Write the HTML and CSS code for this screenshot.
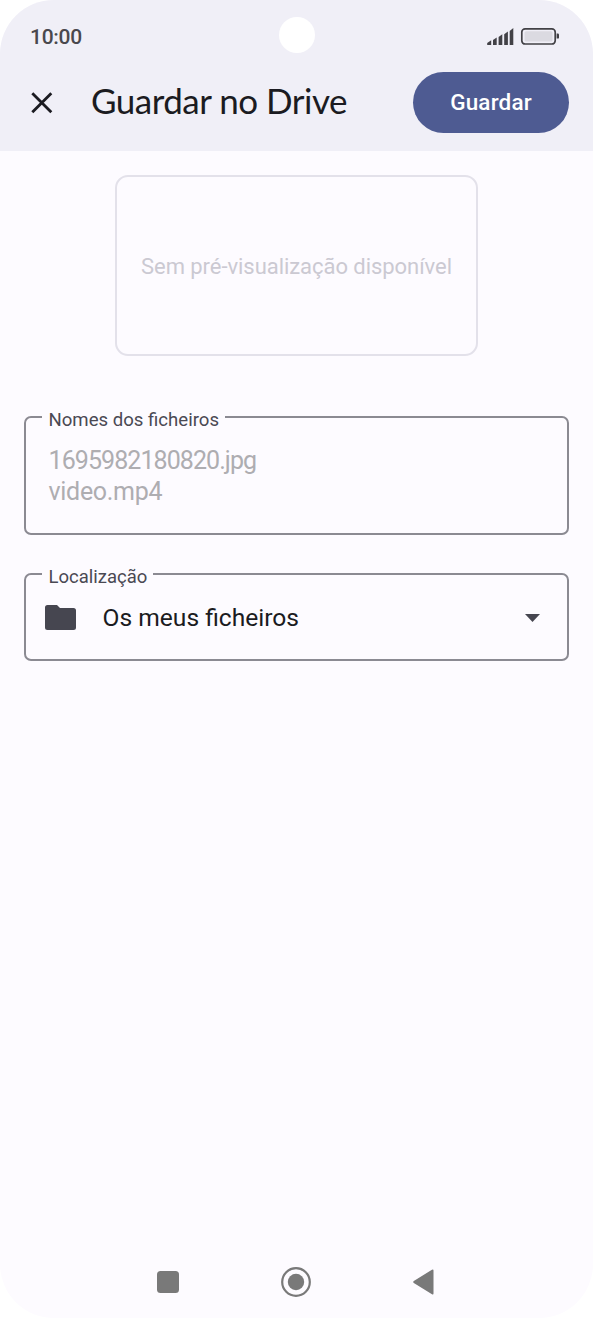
FILE: index.html
```html
<!DOCTYPE html>
<html lang="pt">
<head>
<meta charset="utf-8">
<title>Guardar no Drive</title>
<link rel="stylesheet" href="styles.css">
</head>
<body>
<div class="phone">
  <header class="top">
    <div class="status">
      <span class="clock">10:00</span>
      <span class="camera"></span>
      <svg class="indicators" viewBox="486 26 74 20" width="74" height="20">
        <path class="signal" d="M487.2 45v-2l4-2.8V45zM493 45v-5l3.7-2.6V45zM498.6 45v-8l3.7-2.8V45zM504.2 45V34.200l3.700-2.800V45zM509.700 45V31l3.600-3V45z"/>
        <rect class="battery" x="521.800" y="28.800" width="33.400" height="15.200" rx="3.300"/>
        <rect class="charge" x="524.500" y="31.300" width="28" height="10.200" rx="1.500"/>
        <path class="signal" d="M556.600 33.600h1.200q1.200 0 1.200 1.200v2.600q0 1.200-1.200 1.200h-1.200z"/>
      </svg>
    </div>
    <div class="appbar">
      <svg class="close" viewBox="0 0 22 22" width="22" height="22"><path d="M1.300 1.300l19 19M20.300 1.300l-19 19"/></svg>
      <h1 class="title">Guardar no Drive</h1>
      <button class="save"><span class="save-text">Guardar</span></button>
    </div>
  </header>
  <main class="content">
    <div class="preview"><span class="preview-text">Sem pré-visualização disponível</span></div>
    <fieldset class="field names">
      <legend class="legend"><span class="names-label">Nomes dos ficheiros</span></legend>
      <div class="files"><div><span class="file-one">1695982180820.jpg</span></div><div><span class="file-two">video.mp4</span></div></div>
    </fieldset>
    <fieldset class="field location">
      <legend class="legend"><span class="location-label">Localização</span></legend>
      <div class="picker">
        <svg class="folder" viewBox="0 0 31 25" width="31" height="25"><path d="M2.500 0H12l3 3h13.500Q31 3 31 5.500v17Q31 25 28.500 25h-26Q0 25 0 22.500v-20Q0 0 2.500 0z"/></svg>
        <span class="place">Os meus ficheiros</span>
        <svg class="arrow" viewBox="0 0 15 8" width="15" height="8"><path d="M0 0h15L7.500 8z"/></svg>
      </div>
    </fieldset>
  </main>
  <nav class="nav">
    <svg viewBox="0 0 22 22" width="22" height="22"><rect width="22" height="22" rx="3.500"/></svg>
    <svg viewBox="0 0 30 30" width="30" height="30"><circle class="ring" cx="15" cy="15" r="13.800"/><circle cx="15" cy="15" r="8.200"/></svg>
    <svg viewBox="0 0 21 26" width="21" height="26"><path d="M.8 12.100L19 .7q1.500-.8 1.500.8v23q0 1.600-1.500.8L.8 13.900q-1.200-.9 0-1.800z"/></svg>
  </nav>
</div>
</body>
</html>
```
FILE: styles.css
```css
* { box-sizing: border-box; }
body { margin: 0; background: #fff; font-family: Roboto, sans-serif; }
.phone {
  width: 593px; height: 1318px; overflow: hidden;
  display: flex; flex-direction: column;
  background: #fdfbff; border-radius: 54px;
}
.top { height: 151px; background: #f0eff7; }
.status {
  height: 72px; padding: 0 33px 0 30px;
  display: grid; grid-template-columns: 249px 36px 1fr; align-items: center;
}
.clock { font-size: 21px; font-weight: 500; line-height: 24px; color: #49484d; letter-spacing: -.3px; padding-top: 2px; }
.camera { width: 36px; height: 36px; border-radius: 50%; background: #fff; margin-top: -2px; }
.indicators { justify-self: end; }
.signal { fill: #424146; }
.battery { fill: none; stroke: #424146; stroke-width: 1.700px; }
.charge { fill: #dbdae1; }
.appbar { height: 61px; display: flex; align-items: center; padding: 0 24px 0 31px; }
.close { fill: none; stroke: #1b1b21; stroke-width: 2.800px; }
.title { margin: 0 0 0 38px; padding-bottom: 5px; flex: 1; font: 400 35px/44px Lato, sans-serif; color: #1b1b21; letter-spacing: -.5px; white-space: nowrap; }
.save {
  width: 156px; height: 61px; border: 0; padding: 0 0 2px; border-radius: 31px;
  background: #4e5b92; color: #fff; font: 500 22.500px/28px Roboto, sans-serif; letter-spacing: .15px;
}
.content { flex: 1; padding: 24px 24px 0; display: flex; flex-direction: column; }
.preview {
  width: 363px; height: 181px; align-self: center; padding-top: 1px;
  border: 2px solid #e3e1ea; border-radius: 13px;
  display: flex; align-items: center; justify-content: center;
  font-size: 22px; color: #cbc9d2; white-space: nowrap;
}
.preview-text { letter-spacing: -.05px; }
.field { margin: 0; border: 2px solid #8b8a92; border-radius: 7px; padding: 0 16px; min-width: 0; }
.legend { height: 24px; padding: 5px 6px 0 6.500px; font-size: 18.600px; line-height: 20px; color: #4a4953; }
.names { height: 130px; margin-top: 49px; }
.files { padding: 16px 6.500px 0; font-size: 25px; line-height: 31px; color: #aeadb1; }
.file-one { letter-spacing: -.92px; }
.file-two { letter-spacing: -.3px; }
.location { height: 99px; margin-top: 27px; }
.location-label { font-size: 18.500px; }
.picker { display: flex; align-items: center; height: 63px; padding: 0 11px 0 3px; }
.folder, .arrow { fill: #464650; }
.place { margin-left: 26.500px; flex: 1; font-size: 24.600px; color: #1b1b21; }
.nav { height: 72px; padding: 0 159px 0 157px; display: flex; align-items: center; justify-content: space-between; fill: #797979; }
.ring { fill: none; stroke: #797979; stroke-width: 2.200px; }
```
